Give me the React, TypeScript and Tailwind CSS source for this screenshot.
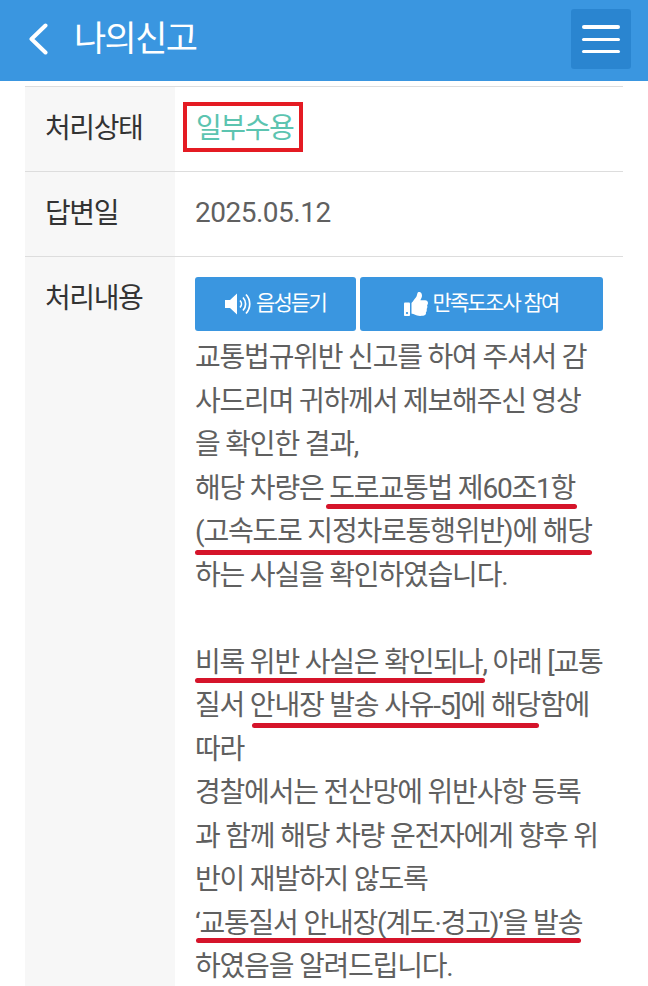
// 나의신고 detail screen: status table with the answer text, red marks drawn over it.
import { FaThumbsUp } from "react-icons/fa";

const BODY_LINES = [
  "교통법규위반 신고를 하여 주셔서 감",
  "사드리며 귀하께서 제보해주신 영상",
  "을 확인한 결과,",
  "해당 차량은 도로교통법 제60조1항",
  "(고속도로 지정차로통행위반)에 해당",
  "하는 사실을 확인하였습니다.",
  "\u00A0",
  "비록 위반 사실은 확인되나, 아래 [교통",
  "질서 안내장 발송 사유-5]에 해당함에",
  "따라",
  "경찰에서는 전산망에 위반사항 등록",
  "과 함께 해당 차량 운전자에게 향후 위",
  "반이 재발하지 않도록",
  "‘교통질서 안내장(계도·경고)’을 발송",
  "하였음을 알려드립니다.",
];

// left / top / width of each hand-drawn underline, relative to the text block
const MARKS = [
  { left: 131, top: 168, width: 251 },
  { left: 0, top: 214, width: 397 },
  { left: 0, top: 342, width: 290 },
  { left: 57, top: 387, width: 287 },
  { left: 1, top: 602, width: 385 },
];

function Label({ children }: { children: string }) {
  return (
    <div className="w-[150px] shrink-0 bg-[#f7f7f7] pl-[20px] pt-[22px] text-[28px] leading-[40px] tracking-[-1.4px] text-[#333333]">
      {children}
    </div>
  );
}

function SpeakerIcon() {
  return (
    <svg width="27" height="24" viewBox="0 0 27 24" aria-hidden>
      <path d="M0 8h5l7-6.500v21L5 16H0z" fill="white" />
      <g fill="none" stroke="white" strokeWidth="1.700">
        <path d="M15 8.500a5 5 0 0 1 0 7" />
        <path d="M18 5.500a9.500 9.500 0 0 1 0 13" />
        <path d="M21 2.500a14 14 0 0 1 0 19" />
      </g>
    </svg>
  );
}

export default function App() {
  return (
    <div className="h-[986px] w-[648px] overflow-hidden bg-white font-['Roboto','Noto_Sans_CJK_KR',sans-serif]">
      <header className="flex h-[81px] items-center bg-[#3a96e0] pl-[28px] pr-[17px]">
        <svg width="20" height="32" viewBox="0 0 20 32" className="mb-[3px] shrink-0" aria-hidden>
          <path d="M17.500 2.500 3.500 16l14 13.500" fill="none" stroke="white" strokeWidth="4" strokeLinecap="round" strokeLinejoin="round" />
        </svg>
        <h1 className="ml-[26px] text-[35px] font-normal tracking-[-1.6px] text-white">나의신고</h1>
        <button className="mb-[3px] ml-auto flex h-[60px] w-[60px] flex-col items-center justify-center gap-[9px] rounded-[3px] bg-[#2a85d0]">
          <span className="h-[4px] w-[38px] rounded-full bg-white" />
          <span className="h-[3px] w-[38px] rounded-full bg-white" />
          <span className="h-[3px] w-[38px] rounded-full bg-white" />
        </button>
      </header>

      <div className="mx-[25px] mt-[5px] border-t border-[#dddddd]">
        <div className="flex h-[85px] border-b border-[#dddddd]">
          <Label>처리상태</Label>
          <div className="pl-[8px] pt-[15px]">
            <div className="border-[4px] border-[#e41b23] pl-[9px] pr-[6px] pt-[3px] text-[28px] leading-[39px] tracking-[-1.4px] text-[#5cc4b0]">
              일부수용
            </div>
          </div>
        </div>
        <div className="flex h-[85px] border-b border-[#dddddd]">
          <Label>답변일</Label>
          <div className="pl-[20px] pt-[21px] text-[28px] leading-[40px] tracking-[-0.5px] text-[#606060]">
            2025.05.12
          </div>
        </div>
        <div className="flex h-[730px]">
          <Label>처리내용</Label>
          <div className="pl-[20px] pt-[20px]">
            <div className="flex gap-[4px]">
              <button className="flex h-[54px] w-[161px] items-center justify-center gap-[4px] rounded-[3px] bg-[#3a96e0] text-[21px] tracking-[-1.8px] text-white">
                <SpeakerIcon />
                음성듣기
              </button>
              <button className="flex h-[54px] w-[243px] items-center justify-center gap-[4px] rounded-[3px] bg-[#3a96e0] text-[21px] tracking-[-1.8px] text-white">
                <FaThumbsUp className="text-[24px]" />
                만족도조사 참여
              </button>
            </div>
            <div className="relative mt-[5px] whitespace-nowrap text-[28px] leading-[43.5px] tracking-[-1.2px] text-[#606060]">
              {BODY_LINES.map((line, i) => (
                <div key={i}>{line}</div>
              ))}
              {MARKS.map((mark, i) => (
                <span
                  key={i}
                  className="absolute h-[5px] rounded-full bg-[#d5142a]"
                  style={{ left: mark.left, top: mark.top, width: mark.width }}
                />
              ))}
            </div>
          </div>
        </div>
      </div>
    </div>
  );
}
